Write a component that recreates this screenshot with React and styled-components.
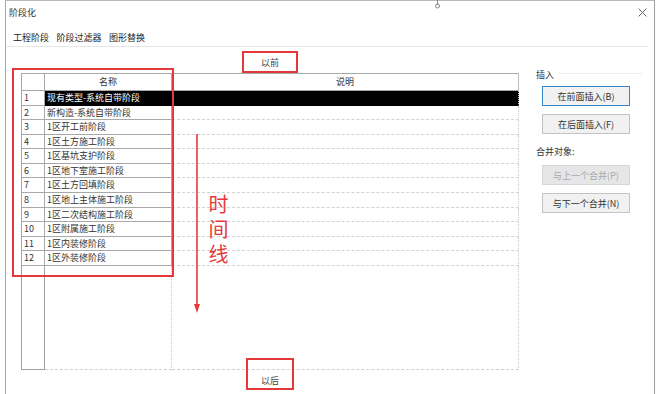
import React from "react";
import styled, { createGlobalStyle } from "styled-components";

const Global = createGlobalStyle`
  html, body { margin: 0; padding: 0; background: #fff; }
  body { font-family: "Noto Sans CJK SC", "Noto Sans", "Liberation Sans", sans-serif; }
  * { box-sizing: border-box; }
`;

const RED = "#e4393b";

const Page = styled.div`
  width: 660px;
  height: 394px;
  overflow: hidden;
  padding: 0 5px;
  display: flex;
  position: relative;
  background: #fff;
`;

const Window = styled.div`
  flex: 1;
  display: flex;
  flex-direction: column;
  border-left: 1px solid #a9a9a9;
  border-right: 1px solid #9c9c9c;
  border-top: 1px solid #b8b8b8;
  background: #fff;
  color: #333;
  font-size: 9px;
`;

const TitleBar = styled.div`
  height: 23px;
  display: flex;
  align-items: center;
  justify-content: space-between;
  padding: 0 7px 0 3px;
  line-height: 12px;
`;

const TabBar = styled.div`
  height: 23px;
  display: flex;
  align-items: flex-end;
  gap: 7.5px;
  padding: 0 0 2px 7px;
  margin-right: 6px;
  border-bottom: 1px solid #e6e6e6;
  line-height: 12px;
`;

const Tab = styled.span`
  color: #222;
`;

const Body = styled.div`
  flex: 1;
  display: flex;
`;

const Main = styled.div`
  position: relative;
  width: 513px;
  padding-left: 15px;
  display: flex;
  flex-direction: column;
`;

const EdgeLabel = styled.div`
  width: 498px;
  height: 12px;
  line-height: 12px;
  text-align: center;
  color: #444;
  margin-top: ${(p) => p.$top}px;
  margin-bottom: ${(p) => p.$bottom || 0}px;
`;

const Table = styled.div`
  width: 498px;
  height: 297px;
  display: grid;
  grid-template-columns: 24px 127px 1fr;
  grid-template-rows: 18px repeat(12, 14.58px) 1fr;
`;

const HeadCell = styled.div`
  border-top: 1px solid #a8a8a8;
  border-bottom: 1px solid #a8a8a8;
  border-right: 1px solid ${(p) => (p.$last ? "#bdbdbd" : "#a8a8a8")};
  border-left: ${(p) => (p.$first ? "1px solid #a8a8a8" : "none")};
  text-align: center;
  line-height: 16px;
  color: #333;
`;

const NumCell = styled.div`
  border-left: 1px solid #a8a8a8;
  border-right: 1px solid #a8a8a8;
  border-bottom: 1px solid #a8a8a8;
  padding-left: 2px;
  line-height: 13.5px;
  color: #333;
`;

const NameCell = styled.div`
  border-right: 1px solid ${(p) => (p.$sel ? "#000" : "#a8a8a8")};
  border-bottom: 1px solid ${(p) => (p.$sel ? "#000" : "#a8a8a8")};
  background: ${(p) => (p.$sel ? "#000" : "#fff")};
  color: ${(p) => (p.$sel ? "#fff" : "#333")};
  padding-left: 2px;
  line-height: 13.5px;
  white-space: nowrap;
  overflow: hidden;
`;

const DescCell = styled.div`
  border-right: 1px dotted #c8c8c8;
  border-bottom: 1px dashed ${(p) => (p.$sel ? "#000" : "#d2d2d2")};
  background: ${(p) => (p.$sel ? "#000" : "#fff")};
`;

const FillNum = styled.div`
  border-left: 1px solid #a0a0a0;
  border-right: 1px solid #a0a0a0;
  border-bottom: 1px solid #a0a0a0;
`;

const FillCell = styled.div`
  border-right: 1px dotted #c8c8c8;
  border-bottom: 1px dashed #cfcfcf;
`;

const Panel = styled.div`
  margin-left: 17px;
  width: 106px;
  padding-top: 22px;
  display: flex;
  flex-direction: column;
`;

const Legend = styled.div`
  display: flex;
  align-items: center;
  height: 12px;
  line-height: 12px;
  margin-top: ${(p) => p.$top || 0}px;
  color: #333;
  &::after {
    content: "";
    flex: 1;
    margin-left: 5px;
    border-top: ${(p) => (p.$line ? "1px solid #ececec" : "none")};
    margin-top: -4px;
  }
`;

const Stack = styled.div`
  display: flex;
  flex-direction: column;
  gap: 8px;
  margin-top: ${(p) => p.$top}px;
  padding-left: 6px;
`;

const Button = styled.div`
  width: 88px;
  height: 20px;
  display: flex;
  align-items: center;
  justify-content: center;
  background: ${(p) => (p.$disabled ? "#e6e6e6" : "#f1f1f1")};
  border: 1px solid
    ${(p) => (p.$focus ? "#3585cc" : p.$disabled ? "#d6d6d6" : "#c3c3c3")};
  color: ${(p) => (p.$disabled ? "#a9a9a9" : "#333")};
  white-space: nowrap;
`;

const Frame = styled.div`
  position: absolute;
  left: ${(p) => p.$x}px;
  top: ${(p) => p.$y}px;
  width: ${(p) => p.$w}px;
  height: ${(p) => p.$h}px;
  border: 2px solid ${RED};
  pointer-events: none;
`;

const Arrow = styled.svg`
  position: absolute;
  left: 186px;
  top: 87px;
`;

const Timeline = styled.div`
  position: absolute;
  left: 202px;
  top: 147px;
  writing-mode: vertical-rl;
  text-orientation: upright;
  font-size: 20px;
  line-height: 20px;
  letter-spacing: 5px;
  color: ${RED};
`;

const TopPin = styled.svg`
  position: absolute;
  left: 434px;
  top: 0;
`;

const rows = [
  "现有类型-系统自带阶段",
  "新构造-系统自带阶段",
  "1区开工前阶段",
  "1区土方施工阶段",
  "1区基坑支护阶段",
  "1区地下室施工阶段",
  "1区土方回填阶段",
  "1区地上主体施工阶段",
  "1区二次结构施工阶段",
  "1区附属施工阶段",
  "1区内装修阶段",
  "1区外装修阶段",
];

export default function App() {
  return (
    <>
      <Global />
      <Page>
        <Window>
          <TitleBar>
            <span>阶段化</span>
            <svg width="9" height="9" viewBox="0 0 9 9">
              <path d="M0.5 0.5 L8.5 8.5 M8.5 0.5 L0.5 8.5" stroke="#666" strokeWidth="1" />
            </svg>
          </TitleBar>
          <TabBar>
            <Tab>工程阶段</Tab>
            <Tab>阶段过滤器</Tab>
            <Tab>图形替换</Tab>
          </TabBar>
          <Body>
            <Main>
              <EdgeLabel $top={10} $bottom={4}>以前</EdgeLabel>
              <Table>
                <HeadCell $first />
                <HeadCell>名称</HeadCell>
                <HeadCell $last>说明</HeadCell>
                {rows.map((name, i) => (
                  <React.Fragment key={i}>
                    <NumCell>{i + 1}</NumCell>
                    <NameCell $sel={i === 0}>{name}</NameCell>
                    <DescCell $sel={i === 0} />
                  </React.Fragment>
                ))}
                <FillNum />
                <FillCell />
                <FillCell />
              </Table>
              <EdgeLabel $top={5}>以后</EdgeLabel>

              <Frame $x={6} $y={21} $w={162} $h={209} />
              <Frame $x={236} $y={4} $w={56} $h={22} />
              <Frame $x={240} $y={311} $w={48} $h={32} />
              <Arrow width="10" height="180" viewBox="0 0 10 180">
                <line x1="5" y1="0" x2="5" y2="172" stroke={RED} strokeWidth="1.6" />
                <polygon points="2,170 8,170 5,179" fill={RED} />
              </Arrow>
              <Timeline>时间线</Timeline>
            </Main>
            <Panel>
              <Legend $line>插入</Legend>
              <Stack $top={5}>
                <Button $focus>在前面插入(B)</Button>
                <Button>在后面插入(F)</Button>
              </Stack>
              <Legend $top={12}>合并对象:</Legend>
              <Stack $top={7}>
                <Button $disabled>与上一个合并(P)</Button>
                <Button>与下一个合并(N)</Button>
              </Stack>
            </Panel>
          </Body>
        </Window>
        <TopPin width="7" height="9" viewBox="0 0 7 9">
          <line x1="3.5" y1="0" x2="3.5" y2="5" stroke="#888" strokeWidth="1" />
          <circle cx="3.5" cy="6" r="2" fill="none" stroke="#888" strokeWidth="1" />
        </TopPin>
      </Page>
    </>
  );
}
